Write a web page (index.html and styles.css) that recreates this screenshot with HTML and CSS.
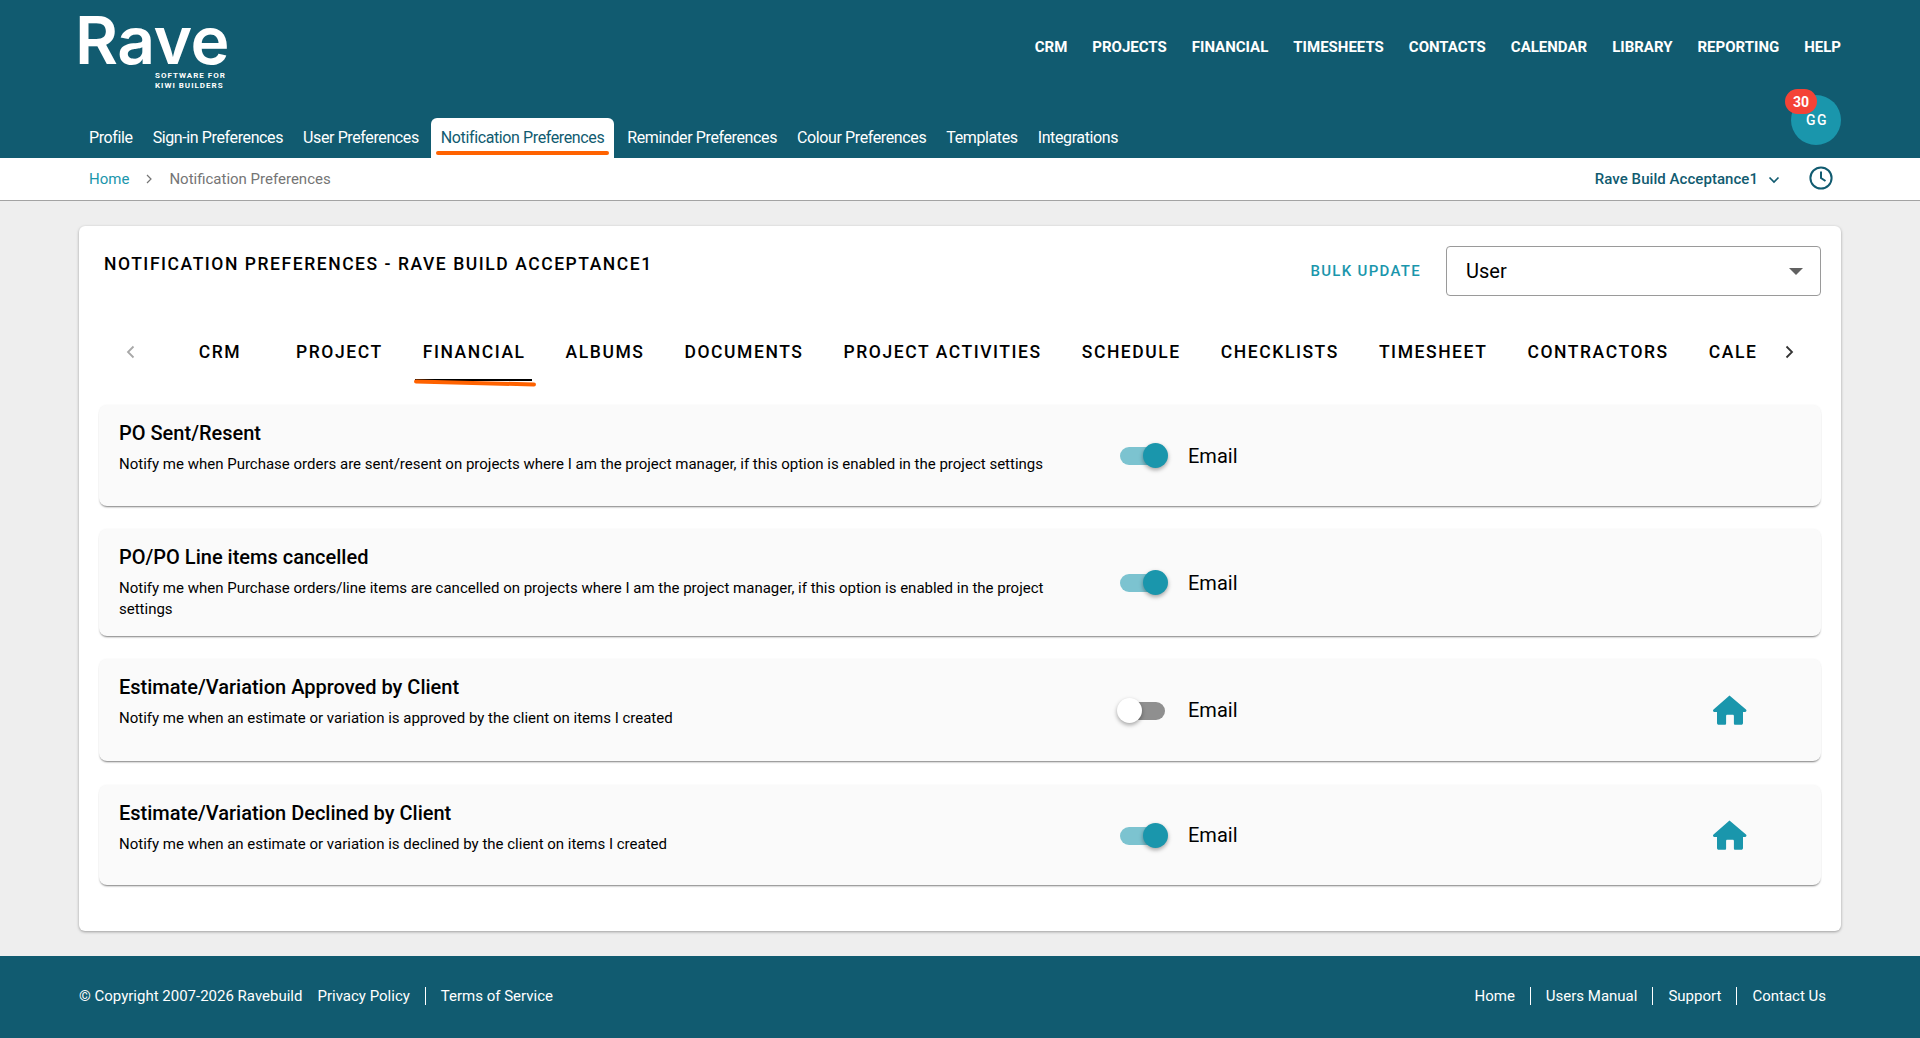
FILE: index.html
```html
<!DOCTYPE html>
<html lang="en">

<head>
    <meta charset="UTF-8">
    <meta name="viewport" content="width=device-width, initial-scale=1.0">
    <title>Notification Preferences</title>
    <link rel="stylesheet" href="styles.css">
</head>

<body>
    <header class="header">
        <div class="header-left">
            <a class="logo" href="#">
                <span class="logo-name">Rave</span>
                <span class="logo-tag">SOFTWARE FOR<br>KIWI BUILDERS</span>
            </a>
            <nav class="subnav">
                <a href="#">Profile</a>
                <a href="#">Sign-in Preferences</a>
                <a href="#">User Preferences</a>
                <a class="active" href="#">Notification Preferences</a>
                <a href="#">Reminder Preferences</a>
                <a href="#">Colour Preferences</a>
                <a href="#">Templates</a>
                <a href="#">Integrations</a>
            </nav>
        </div>
        <div class="header-right">
            <nav class="topnav">
                <a href="#">CRM</a>
                <a href="#">PROJECTS</a>
                <a href="#">FINANCIAL</a>
                <a href="#">TIMESHEETS</a>
                <a href="#">CONTACTS</a>
                <a href="#">CALENDAR</a>
                <a href="#">LIBRARY</a>
                <a href="#">REPORTING</a>
                <a href="#">HELP</a>
            </nav>
            <div class="avatar">GG<span class="badge">30</span></div>
        </div>
    </header>

    <div class="crumbs">
        <div class="crumbs-path">
            <a href="#">Home</a>
            <svg class="crumbs-sep" viewBox="0 0 8 12"><path d="M2 2l4 4-4 4" /></svg>
            <span>Notification Preferences</span>
        </div>
        <div class="crumbs-tools">
            <span class="company">Rave Build Acceptance1</span>
            <svg class="company-arrow" viewBox="0 0 12 8"><path d="M1.5 1.5L6 6l4.5-4.5" /></svg>
            <svg class="clock" viewBox="0 0 24 24"><circle cx="12" cy="12" r="10.6" /><path d="M12 5.5V12l4.5 3" /></svg>
        </div>
    </div>

    <main class="main">
        <section class="card">
            <div class="card-head">
                <h1>NOTIFICATION PREFERENCES - RAVE BUILD ACCEPTANCE1</h1>
                <div class="card-actions">
                    <a class="bulk" href="#">BULK UPDATE</a>
                    <div class="select">User<span class="select-arrow"></span></div>
                </div>
            </div>

            <div class="tabs">
                <svg class="tabs-arrow" viewBox="0 0 10 16"><path d="M7.5 2.5L2 8l5.5 5.5" /></svg>
                <div class="tabs-list">
                    <a class="wide" href="#">CRM</a>
                    <a href="#">PROJECT</a>
                    <a class="active" href="#">FINANCIAL<span class="scribble"></span></a>
                    <a href="#">ALBUMS</a>
                    <a href="#">DOCUMENTS</a>
                    <a href="#">PROJECT ACTIVITIES</a>
                    <a href="#">SCHEDULE</a>
                    <a href="#">CHECKLISTS</a>
                    <a href="#">TIMESHEET</a>
                    <a href="#">CONTRACTORS</a>
                    <a href="#">CALENDAR</a>
                </div>
                <svg class="tabs-arrow next" viewBox="0 0 10 16"><path d="M2.5 2.5L8 8l-5.5 5.5" /></svg>
            </div>

            <div class="row">
                <div class="row-text">
                    <h3>PO Sent/Resent</h3>
                    <p>Notify me when Purchase orders are sent/resent on projects where I am the project manager, if this option is enabled in the project settings</p>
                </div>
                <label class="toggle on"><span class="track"></span><span class="thumb"></span></label>
                <span class="toggle-label">Email</span>
            </div>

            <div class="row">
                <div class="row-text">
                    <h3>PO/PO Line items cancelled</h3>
                    <p>Notify me when Purchase orders/line items are cancelled on projects where I am the project manager, if this option is enabled in the project settings</p>
                </div>
                <label class="toggle on"><span class="track"></span><span class="thumb"></span></label>
                <span class="toggle-label">Email</span>
            </div>

            <div class="row row-wide-gap">
                <div class="row-text">
                    <h3>Estimate/Variation Approved by Client</h3>
                    <p>Notify me when an estimate or variation is approved by the client on items I created</p>
                </div>
                <label class="toggle"><span class="track"></span><span class="thumb"></span></label>
                <span class="toggle-label">Email</span>
                <svg class="home" viewBox="0 0 35 30"><path d="M17.5 0.5L34 14.6c1 1 .4 2.4-1 2.4h-2v11c0 1-.7 1.8-1.8 1.8h-6c-.8 0-1.3-.6-1.3-1.4V21c0-.8-.5-1.3-1.3-1.3h-5.2c-.8 0-1.3.5-1.3 1.3v7.4c0 .8-.5 1.4-1.3 1.4h-6C5.700 29.800 5 29 5 28V17H2.500C1 17 .5 15.600 1.500 14.600z" /></svg>
            </div>

            <div class="row row-last">
                <div class="row-text">
                    <h3>Estimate/Variation Declined by Client</h3>
                    <p>Notify me when an estimate or variation is declined by the client on items I created</p>
                </div>
                <label class="toggle on"><span class="track"></span><span class="thumb"></span></label>
                <span class="toggle-label">Email</span>
                <svg class="home" viewBox="0 0 35 30"><path d="M17.5 0.5L34 14.6c1 1 .4 2.4-1 2.4h-2v11c0 1-.7 1.8-1.8 1.8h-6c-.8 0-1.3-.6-1.3-1.4V21c0-.8-.5-1.3-1.3-1.3h-5.2c-.8 0-1.3.5-1.3 1.3v7.4c0 .8-.5 1.4-1.3 1.4h-6C5.700 29.800 5 29 5 28V17H2.500C1 17 .5 15.600 1.500 14.600z" /></svg>
            </div>
        </section>
    </main>

    <footer class="footer">
        <div class="footer-links">
            <span class="copy">© Copyright 2007-2026 Ravebuild</span>
            <a href="#">Privacy Policy</a>
            <a href="#">Terms of Service</a>
        </div>
        <div class="footer-links right">
            <a href="#">Home</a>
            <a href="#">Users Manual</a>
            <a href="#">Support</a>
            <a href="#">Contact Us</a>
        </div>
    </footer>
</body>

</html>
```

FILE: styles.css
```css
* {
    padding: 0;
    margin: 0;
    box-sizing: border-box;
}

body {
    font-family: Roboto, "Liberation Sans", sans-serif;
    background: #eeeeee;
    color: #000;
    height: 1038px;
    overflow: hidden;
}

a {
    text-decoration: none;
    color: inherit;
}

.header {
    height: 158px;
    background: #115b70;
    color: #fff;
    padding: 0 79px;
    display: flex;
    justify-content: space-between;
}

.header-left {
    flex: 1;
    min-width: 0;
}

.logo {
    height: 118px;
    padding-top: 10px;
    display: block;
    width: 150px;
}

.logo-name {
    display: block;
    font-family: Inter, Roboto, sans-serif;
    font-weight: 600;
    font-size: 66px;
    line-height: 61px;
    letter-spacing: -.5px;
    margin-left: -4px;
    height: 61px;
}

.logo-tag {
    display: block;
    font-size: 8px;
    line-height: 10px;
    font-weight: 700;
    letter-spacing: 1px;
    padding-left: 76px;
    white-space: nowrap;
}

.subnav {
    display: flex;
    height: 40px;
    font-size: 16px;
    letter-spacing: -.385px;
}

.subnav a {
    display: flex;
    align-items: center;
    padding: 0 10px 2px;
    position: relative;
    white-space: nowrap;
}

.subnav a.active {
    background: #fff;
    color: #115b70;
    border-radius: 6px 6px 0 0;
    margin: 0 3px 0 2px;
}

.subnav a.active::after {
    content: '';
    position: absolute;
    left: 5px;
    right: 5px;
    bottom: 3px;
    height: 4px;
    border-radius: 2px;
    background: #ff6200;
}

.header-right {
    flex: none;
    display: flex;
    flex-direction: column;
    align-items: flex-end;
}

.topnav {
    display: flex;
    gap: 25px;
    margin-top: 37px;
    font-size: 15px;
    line-height: 20px;
    font-weight: 700;
    letter-spacing: 0;
}

.avatar {
    position: relative;
    width: 50px;
    height: 50px;
    margin-top: 38px;
    padding-left: 2px;
    border-radius: 50%;
    background: #1a96ac;
    display: flex;
    align-items: center;
    justify-content: center;
    font-size: 14px;
    font-weight: 500;
    letter-spacing: 1.5px;
}

.badge {
    position: absolute;
    left: -6px;
    top: -6px;
    min-width: 32px;
    height: 25px;
    border-radius: 13px;
    background: #f44336;
    display: flex;
    align-items: center;
    justify-content: center;
    font-size: 14px;
    font-weight: 700;
    letter-spacing: 0;
}

.crumbs {
    height: 43px;
    background: #fff;
    border-bottom: 1px solid #a3a3a3;
    padding: 0 79px 0 89px;
    display: flex;
    align-items: center;
    justify-content: space-between;
    font-size: 15px;
}

.crumbs-path {
    display: flex;
    align-items: center;
    color: #757575;
}

.crumbs-path a {
    color: #1a96ac;
}

.crumbs-sep {
    width: 8px;
    height: 12px;
    margin: 0 16px 0 16px;
    fill: none;
    stroke: #757575;
    stroke-width: 1.2;
}

.crumbs-tools {
    display: flex;
    align-items: center;
    padding-right: 8px;
}

.company {
    color: #115b70;
    font-weight: 500;
    font-size: 15px;
    letter-spacing: .05px;
}

.company-arrow {
    width: 12px;
    height: 8px;
    margin: 2px 0 0 10px;
    fill: none;
    stroke: #115b70;
    stroke-width: 1.7;
}

.clock {
    width: 24px;
    height: 24px;
    margin-left: 29px;
    margin-top: -2px;
    fill: none;
    stroke: #115b70;
    stroke-width: 2;
}

.main {
    height: 755px;
    padding: 25px 79px 0;
}

.card {
    height: 705px;
    background: #fff;
    border-radius: 6px;
    padding: 20px 20px 0;
    box-shadow: 0 1px 3px rgba(0, 0, 0, .35);
}

.card-head {
    display: flex;
    justify-content: space-between;
    align-items: flex-start;
    padding-left: 5px;
}

.card-head h1 {
    font-size: 17.500px;
    line-height: 24px;
    font-weight: 500;
    letter-spacing: 1.55px;
    margin-top: 6px;
}

.card-actions {
    display: flex;
    align-items: center;
    gap: 25px;
}

.bulk {
    color: #1a96ac;
    font-size: 15px;
    font-weight: 500;
    letter-spacing: 1.3px;
}

.select {
    width: 375px;
    height: 50px;
    border: 1px solid #9a9a9a;
    border-radius: 4px;
    padding: 0 19px;
    font-size: 20px;
    display: flex;
    align-items: center;
    justify-content: space-between;
}

.select-arrow {
    width: 0;
    height: 0;
    border-left: 7px solid transparent;
    border-right: 7px solid transparent;
    border-top: 7px solid #616161;
    margin-right: -2px;
}

.tabs {
    height: 94px;
    margin: 9px 0 6px;
    display: flex;
    align-items: center;
    overflow: hidden;
}

.tabs-arrow {
    flex: none;
    width: 10px;
    height: 16px;
    margin-left: 27px;
    fill: none;
    stroke: #a8a8a8;
    stroke-width: 1.8;
}

.tabs-arrow.next {
    stroke: #333;
    margin-left: 27px;
    margin-right: 27px;
}

.tabs-list {
    flex: 1;
    min-width: 0;
    display: flex;
    padding-left: 28px;
    overflow: hidden;
    height: 100%;
}

.tabs-list a {
    flex: none;
    padding: 0 20px;
    font-size: 17.500px;
    font-weight: 500;
    letter-spacing: 1.57px;
    display: flex;
    align-items: center;
    justify-content: center;
    position: relative;
}

.tabs-list a.wide {
    min-width: 112px;
}

.tabs-list a.active::before {
    content: '';
    position: absolute;
    left: 12px;
    right: 14px;
    top: 74px;
    height: 2px;
    background: #000;
}

.scribble {
    position: absolute;
    left: 11px;
    right: 10px;
    top: 76px;
    height: 4px;
    border-radius: 2px;
    background: #ff6200;
    transform: rotate(1.5deg);
}

.row {
    display: flex;
    align-items: center;
    min-height: 101px;
    margin-bottom: 23px;
    padding: 0 20px;
    background: #fafafa;
    border-radius: 8px;
    box-shadow: 0 2px 2px -1px rgba(0, 0, 0, .5), 0 0 2px rgba(0, 0, 0, .05);
    position: relative;
}

.row-wide-gap {
    min-height: 102px;
    margin-bottom: 24px;
}

.row-last {
    min-height: 100px;
}

.row-text {
    width: 940px;
    flex: none;
    align-self: flex-start;
    padding-top: 16px;
    padding-bottom: 16.500px;
}

.row-text h3 {
    font-size: 20px;
    line-height: 24px;
    font-weight: 500;
}

.row-text p {
    font-size: 15px;
    line-height: 21px;
    margin-top: 8.500px;
}

.toggle {
    position: relative;
    width: 51px;
    height: 25px;
    margin-left: 58px;
    flex: none;
}

.track {
    position: absolute;
    left: 3px;
    right: 3px;
    top: 4px;
    height: 18px;
    border-radius: 9px;
    background: #8f8f8f;
}

.thumb {
    position: absolute;
    left: 0;
    top: 0;
    width: 25px;
    height: 25px;
    border-radius: 50%;
    background: #fff;
    box-shadow: 0 2px 4px rgba(0, 0, 0, .35);
}

.toggle.on .track {
    background: #7cc3d0;
}

.toggle.on .thumb {
    left: 26px;
    background: #1a96ac;
}

.toggle-label {
    font-size: 20px;
    margin-left: 20px;
}

.home {
    width: 35px;
    height: 30px;
    margin-left: auto;
    margin-right: 54px;
    fill: #1a96ac;
}

.footer {
    height: 82px;
    background: #115b70;
    color: #fff;
    padding: 0 79px 2px;
    display: flex;
    align-items: center;
    justify-content: space-between;
    font-size: 15px;
}

.footer-links {
    display: flex;
    align-items: center;
}

.footer-links a {
    padding: 0 15px;
    line-height: 18px;
}

.footer-links a + a {
    border-left: 1px solid #fff;
}
```
